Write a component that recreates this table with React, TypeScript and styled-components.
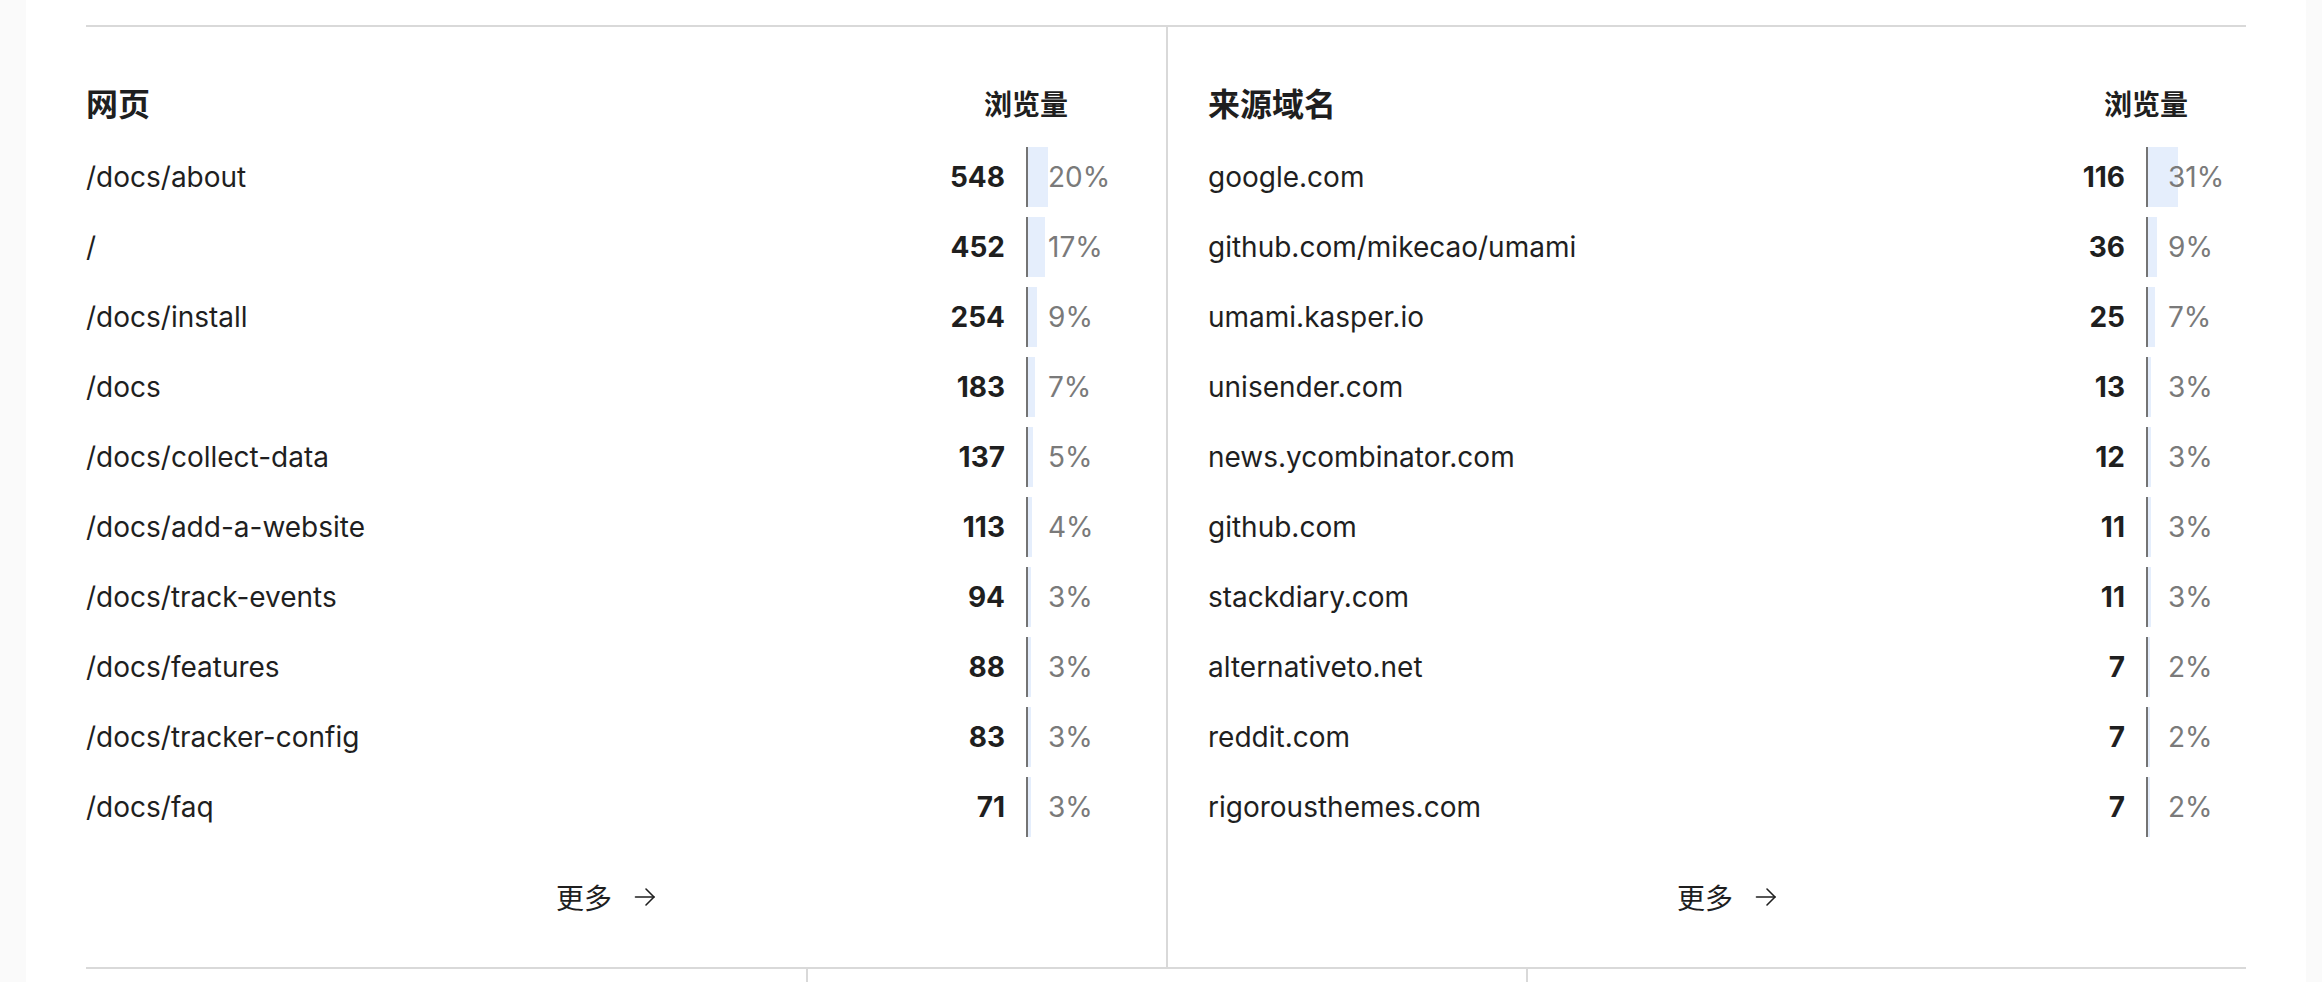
import React from "react";
import styled, { createGlobalStyle } from "styled-components";

const GlobalStyle = createGlobalStyle`
  html, body {
    margin: 0;
    padding: 0;
    background: #fafafa;
    font-family: Inter, "Noto Sans CJK SC", "Noto Sans", sans-serif;
    color: #212121;
  }
  * { box-sizing: border-box; }
`;

const Page = styled.div`
  margin-left: 26px;
  width: 2280px;
  height: 982px;
  overflow: hidden;
  background: #ffffff;
  padding: 25px 60px 0;
`;

const Row = styled.div<{ $cols: number }>`
  display: grid;
  grid-template-columns: repeat(${(p) => p.$cols}, 1fr);
  border-top: 2px solid #d9d9d9;
`;

const Cell = styled.div`
  padding: 40px 40px 40px 0;
  & + & {
    border-left: 2px solid #d9d9d9;
    padding: 40px 0 40px 40px;
  }
`;

const StubCell = styled.div`
  height: 40px;
  & + & {
    border-left: 2px solid #d9d9d9;
  }
`;

const Table = styled.div`
  display: flex;
  flex-direction: column;
`;

const Header = styled.div`
  display: flex;
  align-items: center;
  height: 80px;
  padding-bottom: 4px;
`;

const Title = styled.div`
  flex: 1;
  font-size: 32px;
  line-height: 40px;
  font-weight: 700;
  color: #1f1f1f;
`;

const MetricHead = styled.div`
  width: 200px;
  text-align: center;
  font-size: 28px;
  line-height: 40px;
  font-weight: 700;
  color: #1f1f1f;
`;

const Rows = styled.div`
  display: flex;
  flex-direction: column;
  gap: 10px;
`;

const Item = styled.div`
  display: flex;
  align-items: center;
  height: 60px;
  font-size: 28px;
`;

const Label = styled.div`
  flex: 1;
  min-width: 0;
  white-space: nowrap;
  overflow: hidden;
  text-overflow: ellipsis;
  color: #1f1f1f;
`;

const Value = styled.div`
  width: 100px;
  padding-right: 21px;
  text-align: right;
  font-weight: 700;
  color: #1f1f1f;
`;

const Percent = styled.div`
  position: relative;
  width: 100px;
  height: 100%;
  border-left: 2px solid #747474;
  padding-left: 20px;
  display: flex;
  align-items: center;
  color: #7a7a7a;
`;

const Bar = styled.div`
  position: absolute;
  left: 0;
  top: 0;
  bottom: 0;
  background: #e5eefc;
  z-index: 0;
`;

const PercentText = styled.span`
  position: relative;
  z-index: 1;
`;

const Footer = styled.div`
  display: flex;
  justify-content: center;
  margin-top: 30px;
`;

const MoreButton = styled.button`
  height: 60px;
  display: flex;
  align-items: center;
  gap: 22px;
  border: none;
  background: transparent;
  font-family: inherit;
  font-size: 28px;
  color: #1f1f1f;
  padding: 0;
  cursor: pointer;
`;

type Entry = { label: string; value: number; pct: number };

const pages: Entry[] = [
  { label: "/docs/about", value: 548, pct: 20 },
  { label: "/", value: 452, pct: 17 },
  { label: "/docs/install", value: 254, pct: 9 },
  { label: "/docs", value: 183, pct: 7 },
  { label: "/docs/collect-data", value: 137, pct: 5 },
  { label: "/docs/add-a-website", value: 113, pct: 4 },
  { label: "/docs/track-events", value: 94, pct: 3 },
  { label: "/docs/features", value: 88, pct: 3 },
  { label: "/docs/tracker-config", value: 83, pct: 3 },
  { label: "/docs/faq", value: 71, pct: 3 },
];

const referrers: Entry[] = [
  { label: "google.com", value: 116, pct: 31 },
  { label: "github.com/mikecao/umami", value: 36, pct: 9 },
  { label: "umami.kasper.io", value: 25, pct: 7 },
  { label: "unisender.com", value: 13, pct: 3 },
  { label: "news.ycombinator.com", value: 12, pct: 3 },
  { label: "github.com", value: 11, pct: 3 },
  { label: "stackdiary.com", value: 11, pct: 3 },
  { label: "alternativeto.net", value: 7, pct: 2 },
  { label: "reddit.com", value: 7, pct: 2 },
  { label: "rigorousthemes.com", value: 7, pct: 2 },
];

const ArrowRight = () => (
  <svg width="22" height="22" viewBox="0 0 22 22" fill="none" stroke="#1f1f1f" strokeWidth="1.6" strokeLinecap="round" strokeLinejoin="round">
    <path d="M1.5 11 H20" />
    <path d="M12 3 L20 11 L12 19" />
  </svg>
);

const MetricsTable = ({ title, data }: { title: string; data: Entry[] }) => (
  <Table>
    <Header>
      <Title>{title}</Title>
      <MetricHead>浏览量</MetricHead>
    </Header>
    <Rows>
      {data.map((d) => (
        <Item key={d.label}>
          <Label>{d.label}</Label>
          <Value>{d.value}</Value>
          <Percent>
            <Bar style={{ width: `${d.pct}%` }} />
            <PercentText>{d.pct}%</PercentText>
          </Percent>
        </Item>
      ))}
    </Rows>
    <Footer>
      <MoreButton>
        更多
        <ArrowRight />
      </MoreButton>
    </Footer>
  </Table>
);

export default function App() {
  return (
    <>
      <GlobalStyle />
      <Page>
        <Row $cols={2}>
          <Cell>
            <MetricsTable title="网页" data={pages} />
          </Cell>
          <Cell>
            <MetricsTable title="来源域名" data={referrers} />
          </Cell>
        </Row>
        <Row $cols={3}>
          <StubCell />
          <StubCell />
          <StubCell />
        </Row>
      </Page>
    </>
  );
}
